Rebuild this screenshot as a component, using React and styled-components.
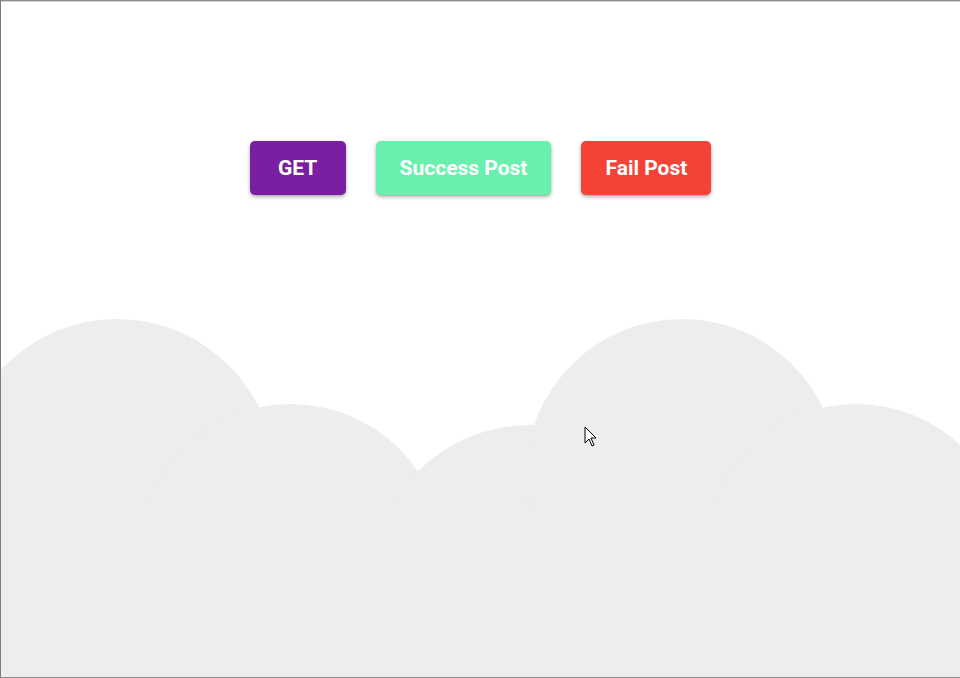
import React from 'react'
import styled, { createGlobalStyle } from 'styled-components';

const GlobalStyle = createGlobalStyle`
  html, body {
    margin: 0;
    padding: 0;
    background: #ffffff;
    font-family: Roboto, "Liberation Sans", sans-serif;
  }
`;

const Frame = styled.div`
  position: relative;
  box-sizing: border-box;
  width: 960px;
  height: 678px;
  display: flex;
  flex-direction: column;
  border-top: 1px solid #8c8c8c;
  border-left: 1px solid #7a7a7a;
  border-bottom: 1px solid #8c8c8c;
  box-shadow: inset 0 1px 0 #d4d4d4;
  overflow: hidden;
`;

const ButtonRow = styled.div`
  display: flex;
  justify-content: center;
  padding-top: 140px;
  gap: 30px;
`;

const ActionButton = styled.button`
  height: 54px;
  min-width: 96px;
  padding: 0 24px;
  border: none;
  border-radius: 5px;
  background: ${({ color }) => color};
  color: #ffffff;
  font-family: Roboto, "Liberation Sans", sans-serif;
  font-weight: 700;
  font-size: 21px;
  box-shadow: 0 2px 4px rgba(0, 0, 0, 0.28), 0 1px 2px rgba(0, 0, 0, 0.12);
  cursor: pointer;
`;

const Clouds = styled.svg`
  display: block;
  margin-top: auto;
  width: 959px;
  height: 358px;
`;

const Pointer = styled.svg`
  position: absolute;
  left: 583px;
  top: 425px;
`;

function App() {
  return (
    <>
      <GlobalStyle />
      <Frame>
        <ButtonRow>
          <ActionButton color="#7b1fa2">GET</ActionButton>
          <ActionButton color="#69f0ae">Success Post</ActionButton>
          <ActionButton color="#f44336">Fail Post</ActionButton>
        </ButtonRow>
        <Clouds viewBox="0 0 959 358">
          <g fill="#ededed">
            <circle cx="116" cy="158" r="158" />
            <circle cx="290" cy="238" r="153" />
            <circle cx="529" cy="265" r="159" />
            <circle cx="681" cy="156" r="156" />
            <circle cx="855" cy="238" r="153" />
            <rect x="0" y="190" width="959" height="168" />
          </g>
        </Clouds>
        <Pointer width="14" height="22" viewBox="0 0 14 22">
          <path d="M1 1 L1 17 L5 13 L8 20 L10 19 L7 12 L12 12 Z" fill="#ffffff" stroke="#000000" strokeWidth="1" strokeLinejoin="round" />
        </Pointer>
      </Frame>
    </>
  )
}

export default App
